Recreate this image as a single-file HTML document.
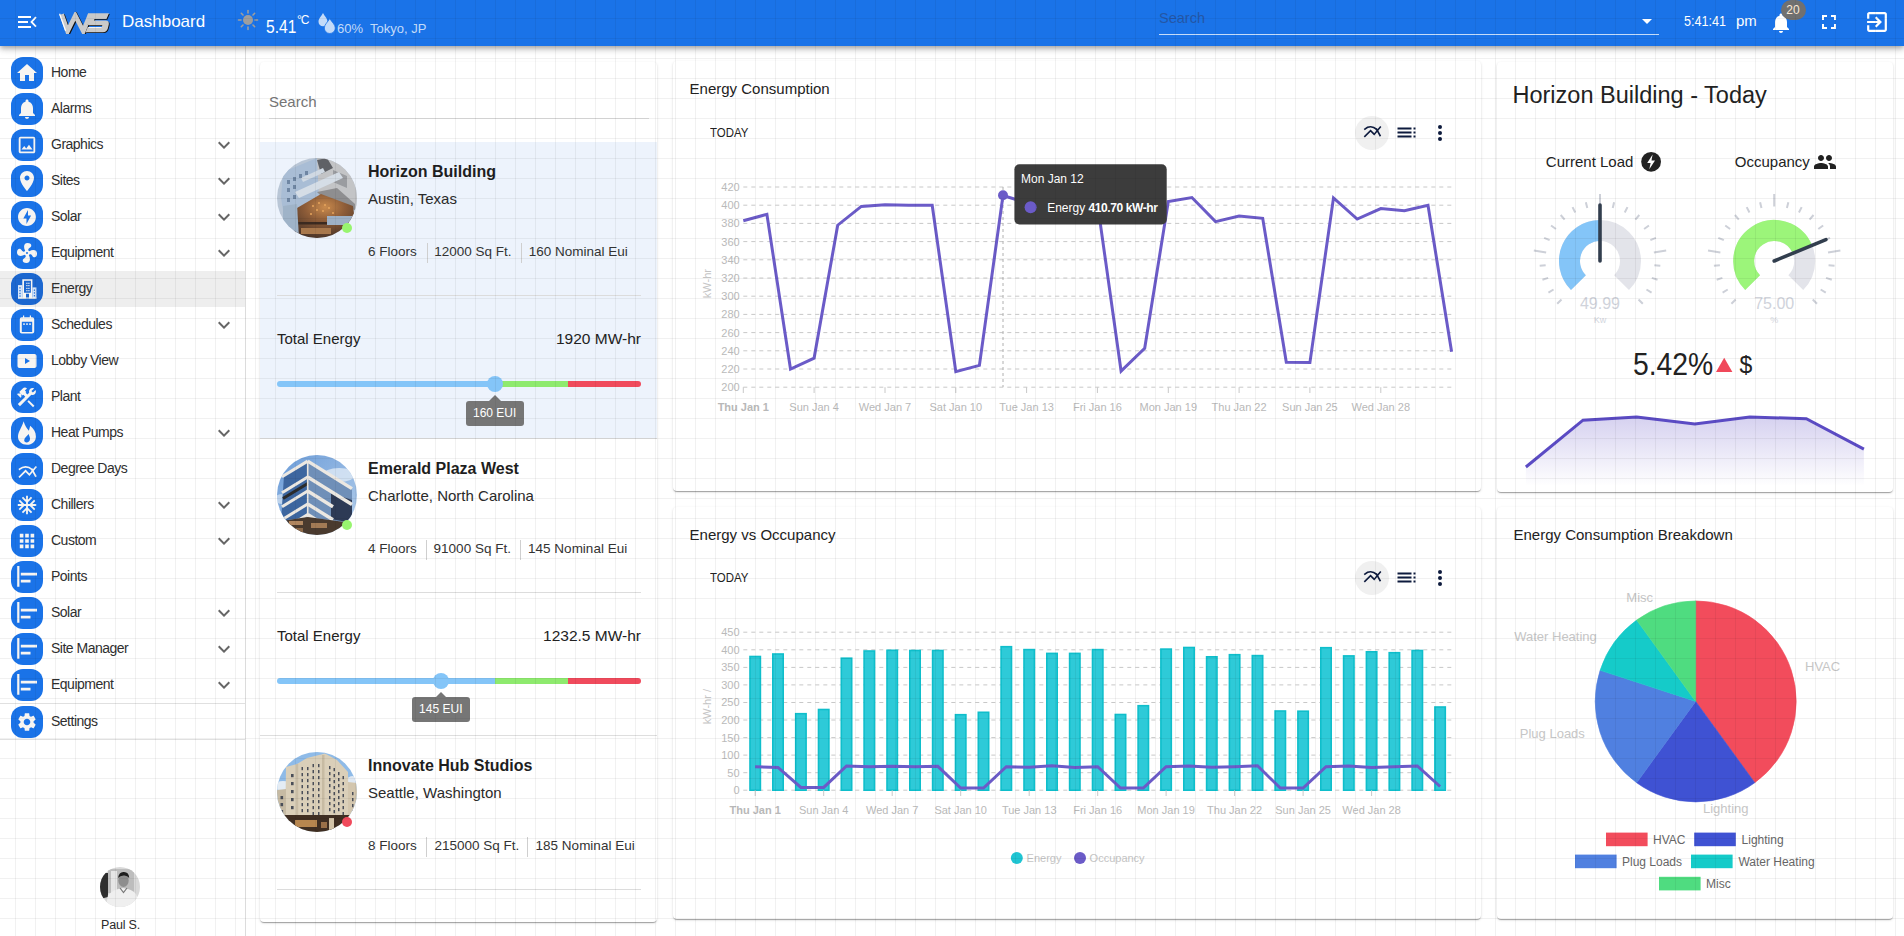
<!DOCTYPE html>
<html><head><meta charset="utf-8">
<style>
*{box-sizing:border-box}
html,body{margin:0;padding:0}
body{width:1904px;height:936px;overflow:hidden;position:relative;background:#fff;font-family:"Liberation Sans",sans-serif;color:#222}
.abs{position:absolute}
.grid{position:absolute;left:0;top:0;width:1904px;height:936px;z-index:100;pointer-events:none;
background-image:linear-gradient(to right,rgba(0,0,0,.055) 1px,transparent 1px),linear-gradient(to bottom,rgba(0,0,0,.055) 1px,transparent 1px);
background-size:20px 20px;background-position:15px 18px}
#hdr{left:0;top:0;width:1904px;height:46px;background:#1a73e8;z-index:10;box-shadow:0 2px 4px -1px rgba(0,0,0,.2),0 4px 5px 0 rgba(0,0,0,.14),0 1px 10px 0 rgba(0,0,0,.12)}
.ht{position:absolute;white-space:nowrap;line-height:1}
#side{left:0;top:46px;width:246px;height:890px;border-right:1px solid #dcdcdc;background:#fff}
.mi{position:absolute;left:0;width:245px;height:36px}
.mi .ic{position:absolute;left:11px;top:2px;width:32px;height:32px;border-radius:12px;background:#1a73e8}
.mi .ic svg{position:absolute;left:4px;top:4px;width:24px;height:24px;fill:#f7f5f2}
.mi .lb{position:absolute;left:51px;top:8.8px;font-size:14px;letter-spacing:-.5px;line-height:16px;color:#2f2f2f;white-space:nowrap}
.mi .cv{position:absolute;left:216px;top:11px;width:16px;height:16px}
.card{position:absolute;background:#fff;border-radius:4px;box-shadow:0 2px 1px -1px rgba(0,0,0,.2),0 1px 1px 0 rgba(0,0,0,.14),0 1px 3px 0 rgba(0,0,0,.12)}
</style></head><body>
<div class="grid"></div>

<!-- HEADER -->
<div id="hdr" class="abs">
  <svg class="abs" style="left:17px;top:15px" width="20" height="14" viewBox="0 0 20 14">
    <rect x="1" y="1" width="13" height="2" fill="#fff"/><rect x="1" y="6" width="10" height="2" fill="#fff"/><rect x="1" y="11" width="13" height="2" fill="#fff"/>
    <path d="M19 2.2 L14.5 7 L19 11.6" stroke="#fff" stroke-width="1.8" fill="none"/>
  </svg>
  <svg class="abs" style="left:57px;top:12px" width="54" height="22" viewBox="0 0 54 22">
    <polyline points="4.6,2.2 10.6,19.2 18.3,3.6 26.3,19.2 33,3" fill="none" stroke="#111" stroke-width="4.6" stroke-linejoin="miter" stroke-miterlimit="3" transform="translate(1,0.8)"/>
    <polyline points="4.6,2.2 10.6,19.2 18.3,3.6 26.3,19.2 33,3" fill="none" stroke="#cbcbcb" stroke-width="4.6" stroke-linejoin="miter" stroke-miterlimit="3"/>
    <path d="M2.6 1.8 L8.6 18.8" stroke="#fff" stroke-width="1.2"/>
    <path d="M31 1.2 H52 L49.5 7 H37.5 L37 8.5 H48.5 Q52.5 8.5 51.8 12.5 L50.8 16.5 Q49.8 20.2 46 20.2 H28.5 L30.8 15 H44.8 L45.3 13.2 H33 Q29.2 13.2 30 10Z" fill="#111" transform="translate(0.8,0.8)"/>
    <path d="M31 1.2 H52 L49.5 7 H37.5 L37 8.5 H48.5 Q52.5 8.5 51.8 12.5 L50.8 16.5 Q49.8 20.2 46 20.2 H28.5 L30.8 15 H44.8 L45.3 13.2 H33 Q29.2 13.2 30 10Z" fill="#c9c9c9"/>
    <path d="M31.5 15.5 H44.5" stroke="#fff" stroke-width=".8"/>
  </svg>
  <div class="ht" style="left:122px;top:13px;font-size:17px;color:#fff">Dashboard</div>
  <svg class="abs" style="left:237px;top:9px" width="22" height="22" viewBox="0 0 22 22">
    <circle cx="11" cy="11" r="5" fill="#9e9e9e"/>
    <g stroke="#9e9e9e" stroke-width="1.6" stroke-linecap="round">
      <line x1="11" y1="1.5" x2="11" y2="4"/><line x1="11" y1="18" x2="11" y2="20.5"/><line x1="1.5" y1="11" x2="4" y2="11"/><line x1="18" y1="11" x2="20.5" y2="11"/>
      <line x1="4.3" y1="4.3" x2="6" y2="6"/><line x1="16" y1="16" x2="17.7" y2="17.7"/><line x1="4.3" y1="17.7" x2="6" y2="16"/><line x1="16" y1="6" x2="17.7" y2="4.3"/>
    </g>
  </svg>
  <div class="ht" style="left:266px;top:16.8px;font-size:19px;color:#fff;transform:scaleX(.82);transform-origin:0 0">5.41</div>
  <div class="ht" style="left:297px;top:14px;font-size:12px;color:#fff;letter-spacing:-1px">°C</div>
  <svg class="abs" style="left:318px;top:13px" width="18" height="21" viewBox="0 0 18 21">
    <path d="M5 0 C6.5 3 9.5 5.5 9.5 8.8 A4.5 4.5 0 0 1 0.5 8.8 C0.5 5.5 3.5 3 5 0Z" fill="#c3dbf9"/>
    <path d="M11.8 5.5 C13.5 8.8 17.3 11.5 17.3 15 A5.5 5.5 0 0 1 6.3 15 C6.3 11.5 10 8.8 11.8 5.5Z" fill="#c3dbf9" stroke="#1a73e8" stroke-width="0.8"/>
  </svg>
  <div class="ht" style="left:337px;top:22px;font-size:13px;color:#c3dbf9">60%</div>
  <div class="ht" style="left:370px;top:22px;font-size:13px;color:#c3dbf9">Tokyo, JP</div>

  <div class="ht" style="left:1159px;top:11px;font-size:14.5px;color:#2457a6">Search</div>
  <div class="abs" style="left:1159px;top:34px;width:500px;height:1px;background:rgba(255,255,255,.75)"></div>
  <svg class="abs" style="left:1641px;top:18px" width="12" height="7" viewBox="0 0 12 7"><path d="M1 1 H11 L6 6Z" fill="#fff"/></svg>
  <div class="ht" style="left:1683.5px;top:13px;font-size:15px;transform:scaleX(.84);transform-origin:0 0;color:#fff">5:41:41</div><div class="ht" style="left:1736px;top:13px;font-size:15px;color:#fff">pm</div>
  <svg class="abs" style="left:1769px;top:12px" width="24" height="22" viewBox="0 1 24 22"><path fill="#fff" d="M12 22c1.1 0 2-.9 2-2h-4c0 1.1.89 2 2 2zm6-6v-5c0-3.07-1.64-5.64-4.5-6.32V4c0-.83-.67-1.5-1.5-1.5s-1.5.67-1.5 1.5v.68C7.63 5.36 6 7.92 6 11v5l-2 2v1h16v-1l-2-2z"/></svg>
  <div class="abs" style="left:1780.5px;top:0;width:25px;height:20px;border-radius:10px;background:#707070;color:#fbe9d6;font-size:12px;line-height:20px;text-align:center">20</div>
  <svg class="abs" style="left:1822px;top:15px" width="14" height="14" viewBox="5 5 14 14"><path fill="#fff" d="M7 14H5v5h5v-2H7v-3zm-2-4h2V7h3V5H5v5zm12 7h-3v2h5v-5h-2v3zM14 5v2h3v3h2V5h-5z"/></svg>
  <svg class="abs" style="left:1866px;top:11px" width="22" height="22" viewBox="2 2 20 20"><path fill="#fff" d="M10.09 15.59L11.5 17l5-5-5-5-1.41 1.41L12.67 11H3v2h9.67l-2.58 2.59zM19 3H5c-1.11 0-2 .9-2 2v4h2V5h14v14H5v-4H3v4c0 1.1.89 2 2 2h14c1.1 0 2-.9 2-2V5c0-1.1-.9-2-2-2z"/></svg>
</div>

<!-- SIDEBAR -->
<div id="side" class="abs">
<div class="abs" style="left:0;top:225px;width:245px;height:36px;background:#eee"></div>
<div class="abs" style="left:0;top:657px;width:245px;height:1px;background:#e0e0e0"></div>
<div class="abs" style="left:0;top:693px;width:245px;height:1px;background:#e0e0e0"></div>
<div class="mi" style="top:9px"><div class="ic"><svg viewBox="0 0 24 24"><path d="M10 20v-6h4v6h5v-8h3L12 3 2 12h3v8z"/></svg></div><div class="lb">Home</div></div>
<div class="mi" style="top:45px"><div class="ic"><svg viewBox="0 0 24 24"><path d="M12 22c1.1 0 2-.9 2-2h-4c0 1.1.89 2 2 2zm6-6v-5c0-3.07-1.64-5.64-4.5-6.32V4c0-.83-.67-1.5-1.5-1.5s-1.5.67-1.5 1.5v.68C7.63 5.36 6 7.92 6 11v5l-2 2v1h16v-1l-2-2z"/></svg></div><div class="lb">Alarms</div></div>
<div class="mi" style="top:81px"><div class="ic"><svg viewBox="0 0 24 24"><path d="M19 5v14H5V5h14m0-2H5c-1.1 0-2 .9-2 2v14c0 1.1.9 2 2 2h14c1.1 0 2-.9 2-2V5c0-1.1-.9-2-2-2zm-4.86 8.86l-3 3.87L9 13.14 6 17h12l-3.86-5.14z" transform="translate(12,12) scale(.92) translate(-12,-12)"/></svg></div><div class="lb">Graphics</div><svg class="cv" viewBox="0 0 24 24" width="24" height="24" style="left:212px;top:5.8px;width:24px;height:24px"><path d="M16.59 8.59L12 13.17 7.41 8.59 6 10l6 6 6-6z" fill="#666"/></svg></div>
<div class="mi" style="top:117px"><div class="ic"><svg viewBox="0 0 24 24"><path d="M12 2C8.13 2 5 5.13 5 9c0 5.25 7 13 7 13s7-7.75 7-13c0-3.87-3.13-7-7-7zm0 9.5c-1.38 0-2.5-1.12-2.5-2.5s1.12-2.5 2.5-2.5 2.5 1.12 2.5 2.5-1.12 2.5-2.5 2.5z"/></svg></div><div class="lb">Sites</div><svg class="cv" viewBox="0 0 24 24" width="24" height="24" style="left:212px;top:5.8px;width:24px;height:24px"><path d="M16.59 8.59L12 13.17 7.41 8.59 6 10l6 6 6-6z" fill="#666"/></svg></div>
<div class="mi" style="top:153px"><div class="ic"><svg viewBox="0 0 24 24"><path d="M12 3.02c-4.95 0-8.98 4.03-8.98 8.98s4.03 8.98 8.98 8.98 8.98-4.03 8.98-8.98S16.95 3.02 12 3.02zM11.48 19v-5.5H8.3L13 5v5.5h3.1L11.48 19z"/></svg></div><div class="lb">Solar</div><svg class="cv" viewBox="0 0 24 24" width="24" height="24" style="left:212px;top:5.8px;width:24px;height:24px"><path d="M16.59 8.59L12 13.17 7.41 8.59 6 10l6 6 6-6z" fill="#666"/></svg></div>
<div class="mi" style="top:189px"><div class="ic"><svg viewBox="0 0 24 24"><path d="M12,11A1,1 0 0,0 11,12A1,1 0 0,0 12,13A1,1 0 0,0 13,12A1,1 0 0,0 12,11M12.5,2C17,2 17.11,5.57 14.75,6.75C13.76,7.24 13.32,8.29 13.13,9.22C13.61,9.42 14.03,9.73 14.35,10.13C18.05,8.13 22.03,8.92 22.03,12.5C22.03,17 18.46,17.1 17.28,14.73C16.78,13.74 15.72,13.3 14.79,13.11C14.59,13.59 14.28,14 13.88,14.34C15.87,18.03 15.08,22 11.5,22C7,22 6.91,18.42 9.27,17.24C10.25,16.75 10.69,15.71 10.89,14.79C10.4,14.59 9.97,14.27 9.65,13.87C5.96,15.85 2,15.07 2,11.5C2,7 5.56,6.89 6.74,9.26C7.24,10.25 8.29,10.68 9.22,10.87C9.41,10.39 9.73,9.97 10.14,9.65C8.15,5.96 8.94,2 12.5,2Z"/></svg></div><div class="lb">Equipment</div><svg class="cv" viewBox="0 0 24 24" width="24" height="24" style="left:212px;top:5.8px;width:24px;height:24px"><path d="M16.59 8.59L12 13.17 7.41 8.59 6 10l6 6 6-6z" fill="#666"/></svg></div>
<div class="mi" style="top:225px"><div class="ic" style="background:#1b67d0"><svg viewBox="0 0 24 24"><path fill-rule="evenodd" d="M7.3 2.3H17.4V21.6H7.3ZM9 3.8H15.9V15.8H9ZM11 16.8H14V21.6H11Z"/><rect x="3" y="8.1" width="4.3" height="13.5" fill="#d6e6fb"/><rect x="17.4" y="10.4" width="4" height="11.2" fill="#d6e6fb"/><g fill="#1b67d0"><rect x="4.4" y="10.2" width="1.2" height="1.3"/><rect x="4.4" y="13" width="1.2" height="1.3"/><rect x="4.4" y="15.8" width="1.2" height="1.3"/><rect x="4.4" y="18.4" width="1.2" height="1.3"/><rect x="18.8" y="12.5" width="1.2" height="1.3"/><rect x="18.8" y="15.3" width="1.2" height="1.3"/><rect x="18.8" y="18.1" width="1.2" height="1.3"/></g><rect x="11.3" y="5.7" width="1.2" height="1.2"/><rect x="13.3" y="5.7" width="1.2" height="1.2"/><rect x="11.3" y="8" width="1.2" height="1.2"/><rect x="13.3" y="8" width="1.2" height="1.2"/><rect x="11.3" y="10.8" width="1.2" height="1.2"/><rect x="13.3" y="10.8" width="1.2" height="1.2"/><rect x="11.3" y="13.1" width="1.2" height="1.2"/><rect x="13.3" y="13.1" width="1.2" height="1.2"/><rect x="3" y="20.5" width="18.4" height="1.1"/></svg></div><div class="lb">Energy</div></div>
<div class="mi" style="top:261px"><div class="ic"><svg viewBox="0 0 24 24"><path fill-rule="evenodd" d="M8 2.6h1.2v1.6h5.6V2.6H16v1.6h1.2c1.1 0 2 .9 2 2v12.2c0 1.1-.9 2-2 2H6.8c-1.1 0-2-.9-2-2V6.2c0-1.1.9-2 2-2H8zM6.8 8.7v10.3h10.4V8.7z"/><rect x="8.2" y="10.3" width="1.6" height="1.6"/><rect x="11.2" y="10.3" width="1.6" height="1.6"/><rect x="14.2" y="10.3" width="1.6" height="1.6"/></svg></div><div class="lb">Schedules</div><svg class="cv" viewBox="0 0 24 24" width="24" height="24" style="left:212px;top:5.8px;width:24px;height:24px"><path d="M16.59 8.59L12 13.17 7.41 8.59 6 10l6 6 6-6z" fill="#666"/></svg></div>
<div class="mi" style="top:297px"><div class="ic"><svg viewBox="0 0 24 24"><path d="M19.5 5H4.5C3.4 5 2.5 5.9 2.5 7v10c0 1.1.9 2 2 2h15c1.1 0 2-.9 2-2V7c0-1.1-.9-2-2-2zM10 15V9l5 3z"/></svg></div><div class="lb">Lobby View</div></div>
<div class="mi" style="top:333px"><div class="ic"><svg viewBox="0 0 24 24"><path d="M13.78 15.17l-1.41 1.41 5.66 5.66 1.41-1.41zM17.5 10c1.93 0 3.5-1.57 3.5-3.5 0-.58-.16-1.12-.41-1.6l-2.7 2.7-1.49-1.49 2.7-2.7c-.48-.25-1.02-.41-1.6-.41C15.57 3 14 4.57 14 6.5c0 .41.08.8.21 1.16l-1.85 1.85-1.78-1.78.71-.71-1.41-1.41L12 3.49c-1.17-1.17-3.07-1.17-4.24 0L4.22 7.03l1.41 1.41H2.81l-.71.71 3.54 3.54.71-.71V9.15l1.41 1.41.71-.71 1.78 1.78-7.41 7.41 2.12 2.12L16.34 9.79c.36.13.75.21 1.16.21z"/></svg></div><div class="lb">Plant</div></div>
<div class="mi" style="top:369px"><div class="ic"><svg viewBox="0 0 24 24"><path d="M8.6 0.2C9.5 3 10.5 5.5 13.9 9.7L15.2 4.8C18.5 7.5 21 11 21 15.5C21 20.5 17 23.8 12 23.8C7 23.8 3 20.5 3 15.8C3 10.5 7 6.5 8.6 0.2Z"/><path fill="#1a73e8" d="M13.7 13C12 15 9.2 16.8 9.2 19.3C9.2 20.8 10.5 21.8 12 21.5C13.8 21.2 15 19.8 15 17.8C15 16 14 14.5 13.7 13Z"/></svg></div><div class="lb">Heat Pumps</div><svg class="cv" viewBox="0 0 24 24" width="24" height="24" style="left:212px;top:5.8px;width:24px;height:24px"><path d="M16.59 8.59L12 13.17 7.41 8.59 6 10l6 6 6-6z" fill="#666"/></svg></div>
<div class="mi" style="top:405px"><div class="ic"><svg viewBox="0 0 24 24"><g fill="none" stroke="#f7f5f2" stroke-width="1.7" stroke-linecap="square"><path d="M4.6 12.2C8 9.3 13 8.8 17 12.5"/><path d="M4.6 19.8L10.6 13.8L14.4 17.8L20.8 10.2"/><path d="M17 12.5L20.6 19" /></g></svg></div><div class="lb">Degree Days</div></div>
<div class="mi" style="top:441px"><div class="ic"><svg viewBox="0 0 24 24"><path d="M22 11h-4.17l3.24-3.24-1.41-1.42L15 11h-2V9l4.66-4.66-1.42-1.41L13 6.17V2h-2v4.17L7.76 2.93 6.34 4.34 11 9v2H9L4.34 6.34 2.93 7.76 6.17 11H2v2h4.17l-3.24 3.24 1.41 1.42L9 13h2v2l-4.66 4.66 1.42 1.41L11 17.83V22h2v-4.17l3.24 3.24 1.42-1.41L13 15v-2h2l4.66 4.66 1.41-1.42L17.83 13H22z" transform="translate(12,12) scale(.92) translate(-12,-12)"/></svg></div><div class="lb">Chillers</div><svg class="cv" viewBox="0 0 24 24" width="24" height="24" style="left:212px;top:5.8px;width:24px;height:24px"><path d="M16.59 8.59L12 13.17 7.41 8.59 6 10l6 6 6-6z" fill="#666"/></svg></div>
<div class="mi" style="top:477px"><div class="ic"><svg viewBox="0 0 24 24"><path transform="translate(12,12) scale(.9) translate(-12,-12)" d="M4 8h4V4H4v4zm6 12h4v-4h-4v4zm-6 0h4v-4H4v4zm0-6h4v-4H4v4zm6 0h4v-4h-4v4zm6-10v4h4V4h-4zm-6 4h4V4h-4v4zm6 6h4v-4h-4v4zm0 6h4v-4h-4v4z"/></svg></div><div class="lb">Custom</div><svg class="cv" viewBox="0 0 24 24" width="24" height="24" style="left:212px;top:5.8px;width:24px;height:24px"><path d="M16.59 8.59L12 13.17 7.41 8.59 6 10l6 6 6-6z" fill="#666"/></svg></div>
<div class="mi" style="top:513px"><div class="ic"><svg viewBox="0 0 24 24"><path d="M4.4 21.7H2.2V.9h2.2zM22 7.8H5.8v2.7H22zM15.5 14.7H5.8v2.8h9.7z"/></svg></div><div class="lb">Points</div></div>
<div class="mi" style="top:549px"><div class="ic"><svg viewBox="0 0 24 24"><path d="M4.4 21.7H2.2V.9h2.2zM22 7.8H5.8v2.7H22zM15.5 14.7H5.8v2.8h9.7z"/></svg></div><div class="lb">Solar</div><svg class="cv" viewBox="0 0 24 24" width="24" height="24" style="left:212px;top:5.8px;width:24px;height:24px"><path d="M16.59 8.59L12 13.17 7.41 8.59 6 10l6 6 6-6z" fill="#666"/></svg></div>
<div class="mi" style="top:585px"><div class="ic"><svg viewBox="0 0 24 24"><path d="M4.4 21.7H2.2V.9h2.2zM22 7.8H5.8v2.7H22zM15.5 14.7H5.8v2.8h9.7z"/></svg></div><div class="lb">Site Manager</div><svg class="cv" viewBox="0 0 24 24" width="24" height="24" style="left:212px;top:5.8px;width:24px;height:24px"><path d="M16.59 8.59L12 13.17 7.41 8.59 6 10l6 6 6-6z" fill="#666"/></svg></div>
<div class="mi" style="top:621px"><div class="ic"><svg viewBox="0 0 24 24"><path d="M4.4 21.7H2.2V.9h2.2zM22 7.8H5.8v2.7H22zM15.5 14.7H5.8v2.8h9.7z"/></svg></div><div class="lb">Equipment</div><svg class="cv" viewBox="0 0 24 24" width="24" height="24" style="left:212px;top:5.8px;width:24px;height:24px"><path d="M16.59 8.59L12 13.17 7.41 8.59 6 10l6 6 6-6z" fill="#666"/></svg></div>
<div class="mi" style="top:658px"><div class="ic"><svg viewBox="0 0 24 24"><path d="M19.14 12.94c.04-.3.06-.61.06-.94 0-.32-.02-.64-.07-.94l2.03-1.58c.18-.14.23-.41.12-.61l-1.92-3.32c-.12-.22-.37-.29-.59-.22l-2.39.96c-.5-.38-1.03-.7-1.62-.94l-.36-2.54c-.04-.24-.24-.41-.48-.41h-3.84c-.24 0-.43.17-.47.41l-.36 2.54c-.59.24-1.130.57-1.62.94l-2.39-.96c-.22-.08-.47 0-.59.22L2.74 8.87c-.12.21-.08.47.12.61l2.03 1.58c-.05.3-.09.63-.09.94s.02.64.07.94l-2.03 1.58c-.18.14-.23.41-.12.61l1.92 3.32c.12.22.37.29.59.22l2.39-.96c.5.38 1.03.7 1.62.94l.36 2.54c.05.24.24.41.48.41h3.84c.24 0 .44-.17.47-.41l.36-2.54c.59-.24 1.130-.56 1.62-.94l2.39.96c.22.08.47 0 .59-.22l1.920-3.32c.12-.22.07-.47-.12-.61l-2.01-1.58zM12 15.6c-1.98 0-3.6-1.62-3.6-3.6s1.62-3.6 3.6-3.6 3.6 1.62 3.6 3.6-1.62 3.6-3.6 3.6z" transform="translate(12,12) scale(.92) translate(-12,-12)"/></svg></div><div class="lb">Settings</div></div>
<div class="abs" style="left:100px;top:821px;width:40px;height:40px"><svg width="40" height="40" viewBox="0 0 40 40"><defs><clipPath id="avc"><circle cx="20" cy="20" r="20"/></clipPath></defs><g clip-path="url(#avc)">
<rect width="40" height="40" fill="#d9d9d9"/><rect x="8" y="2" width="26" height="24" fill="#bdbdbd"/><rect x="11" y="4" width="6" height="22" fill="#e6e6e6"/>
<path d="M0 6 H8 V30 L0 32Z" fill="#2e2e2e"/>
<ellipse cx="23.5" cy="13.5" rx="5.2" ry="6.5" fill="#8e8e8e"/><path d="M18 11 Q19 4.5 24 5 Q29 5 29.2 11 Q27 8 23.5 8.5 Q20 8.5 18 11Z" fill="#1e1e1e"/>
<path d="M6 40 L8 28 Q14 22 23 21 Q32 22 36 27 L40 40Z" fill="#efefef"/><path d="M20 21 L23.5 25.5 L27 21" fill="none" stroke="#777" stroke-width="1.2"/>
</g></svg></div>
<div class="ht" style="left:101px;top:872.6px;font-size:12.5px;letter-spacing:-.2px;color:#2a2a2a">Paul S.</div>
</div>
<!-- BUILDINGS -->
<div class="card" style="left:260px;top:62px;width:397px;height:860px;overflow:hidden">
<div class="ht" style="left:9px;top:31.5px;font-size:15px;color:#757575">Search</div>
<div class="abs" style="left:9px;top:55.5px;width:380px;height:1px;background:#dedede"></div>
<div class="abs" style="left:0;top:79.7px;width:397px;height:297px;background:#edf3fc;border-bottom:1px solid #dedede;"></div>
<div class="abs" style="left:17px;top:95.7px;width:80px;height:80px"><svg width="80" height="80" viewBox="0 0 80 80"><defs><clipPath id="c1"><circle cx="40" cy="40" r="40"/></clipPath><radialGradient id="g1" cx=".5" cy=".3" r=".7"><stop offset="0" stop-color="#c98a4c"/><stop offset=".45" stop-color="#8d5c38"/><stop offset="1" stop-color="#4d3628"/></radialGradient></defs><g clip-path="url(#c1)"><rect width="80" height="80" fill="#b9c6d6"/><polygon points="6,14 40,0 42,40 22,52 8,64 4,40" fill="#a9bdd5"/><polygon points="40,0 52,-2 80,10 80,52 62,44 42,38" fill="#c3c4c6"/><polygon points="40,2 50,0 56,10 44,16" fill="#5f6166"/><polygon points="56,12 70,18 70,30 56,24" fill="#9a9ca0"/><polygon points="18,34 62,14 66,20 22,40" fill="#d5dde6"/><polygon points="24,20 46,10 48,14 26,24" fill="#d0d9e3"/><polygon points="40,34 60,30 78,46 78,52 50,44" fill="#8e8e90"/><rect x="10" y="22" width="3" height="4" fill="#6f86a3"/><rect x="16" y="19" width="3" height="4" fill="#6f86a3"/><rect x="22" y="16" width="3" height="4" fill="#6f86a3"/><rect x="28" y="13" width="3" height="4" fill="#6f86a3"/><rect x="10" y="30" width="3" height="4" fill="#6f86a3"/><rect x="16" y="27" width="3" height="4" fill="#6f86a3"/><rect x="10" y="40" width="3" height="4" fill="#6f86a3"/><rect x="16" y="37" width="3" height="4" fill="#6f86a3"/><rect x="10" y="50" width="3" height="4" fill="#6f86a3"/><polygon points="20,50 44,36 76,48 80,80 16,80" fill="url(#g1)"/><g fill="#e6a55c"><circle cx="36" cy="48" r="1"/><circle cx="42" cy="45" r="1"/><circle cx="48" cy="47" r="1"/><circle cx="40" cy="52" r="1"/><circle cx="46" cy="53" r="1"/><circle cx="52" cy="50" r="1"/><circle cx="34" cy="56" r="1"/><circle cx="56" cy="55" r="1"/></g><rect x="14" y="64" width="66" height="2.5" fill="#3b2a20"/><polygon points="50,58 76,58 76,67 50,67" fill="#9eb1c6"/><polygon points="6,48 20,46 22,80 6,80" fill="#9fb3c8"/><rect x="24" y="70" width="30" height="6" fill="#a8784c"/></g></svg></div>
<div class="abs" style="left:82px;top:161.2px;width:10px;height:10px;border-radius:5px;background:#98f56f"></div>
<div class="ht" style="left:108px;top:101.7px;font-size:16px;font-weight:700;color:#1e1e1e">Horizon Building</div>
<div class="ht" style="left:108px;top:128.7px;font-size:15px;color:#2a2a2a">Austin, Texas</div>
<div class="ht" style="left:108.0px;top:183.2px;font-size:13.5px;color:#333">6 Floors</div><div class="ht" style="left:174.3px;top:183.2px;font-size:13.5px;color:#333">12000 Sq Ft.</div><div class="ht" style="left:268.8px;top:183.2px;font-size:13.5px;color:#333">160 Nominal Eui</div>
<div class="abs" style="left:166.7px;top:180.7px;width:1px;height:20px;background:#cfcfcf"></div>
<div class="abs" style="left:260.7px;top:180.7px;width:1px;height:20px;background:#cfcfcf"></div>
<div class="abs" style="left:17px;top:232.7px;width:364px;height:1px;background:#dcdcdc"></div>
<div class="ht" style="left:17px;top:268.7px;font-size:15px;color:#222">Total Energy</div>
<div class="ht" style="right:16px;top:268.7px;font-size:15.5px;color:#222">1920 MW-hr</div>
<div class="abs" style="left:17px;top:319.0px;width:364px;height:6px;border-radius:3px;background:linear-gradient(to right,#84c5f8 0,#84c5f8 218px,#8eea6e 218px,#8eea6e 291px,#f04a5c 291px)"></div>
<div class="abs" style="left:226.7px;top:314.0px;width:16px;height:16px;border-radius:8px;background:#84c5f8"></div>
<div class="abs" style="left:205.7px;top:338.5px;width:58px;height:25px;border-radius:3px;background:#767676;color:#fff;font-size:12px;line-height:25px;text-align:center">160 EUI</div>
<div class="abs" style="left:228.7px;top:332.7px;width:0;height:0;border-left:6px solid transparent;border-right:6px solid transparent;border-bottom:6px solid #767676"></div>
<div class="abs" style="left:0;top:376.5px;width:397px;height:297px;border-bottom:1px solid #dedede;"></div>
<div class="abs" style="left:17px;top:392.5px;width:80px;height:80px"><svg width="80" height="80" viewBox="0 0 80 80"><defs><clipPath id="c2"><circle cx="40" cy="40" r="40"/></clipPath><linearGradient id="sk2" x1="0" y1="0" x2="1" y2="1"><stop offset="0" stop-color="#6a9bd8"/><stop offset="1" stop-color="#b5cfeb"/></linearGradient></defs><g clip-path="url(#c2)"><rect width="80" height="80" fill="url(#sk2)"/><ellipse cx="62" cy="20" rx="16" ry="7" fill="#d9e6f4" opacity=".85"/><ellipse cx="6" cy="44" rx="9" ry="5" fill="#d9e6f4" opacity=".7"/><polygon points="7,20.6 30.7,6.1 30.7,62 4,66" fill="#3d669f"/><polygon points="30.7,6.1 75,33.5 75,68 30.7,62" fill="#6f8fb8"/><polygon points="54,38 75,45 75,68 54,64" fill="#2d3a55"/><line x1="30.7" y1="6.1" x2="75" y2="33.6" stroke="#ece8e2" stroke-width="3.4"/><line x1="30.7" y1="6.1" x2="5" y2="21.8" stroke="#ece8e2" stroke-width="3"/><line x1="30.7" y1="22" x2="75" y2="49.5" stroke="#ece8e2" stroke-width="3.4"/><line x1="30.7" y1="22" x2="5" y2="37.7" stroke="#ece8e2" stroke-width="3"/><line x1="30.7" y1="36" x2="56" y2="51.7" stroke="#ece8e2" stroke-width="3.4"/><line x1="30.7" y1="36" x2="5" y2="51.7" stroke="#ece8e2" stroke-width="3"/><line x1="30.7" y1="49" x2="56" y2="64.7" stroke="#ece8e2" stroke-width="3.4"/><line x1="30.7" y1="49" x2="5" y2="64.7" stroke="#ece8e2" stroke-width="3"/><line x1="30.7" y1="59.5" x2="56" y2="75.2" stroke="#ece8e2" stroke-width="3.4"/><line x1="30.7" y1="59.5" x2="5" y2="75.2" stroke="#ece8e2" stroke-width="3"/><line x1="30.7" y1="28.5" x2="6" y2="43.5" stroke="#2b2b2b" stroke-width="3"/><line x1="30.7" y1="6" x2="30.7" y2="78" stroke="#ebe6df" stroke-width="1.6"/><polygon points="4,66 30.7,62 75,68 75,80 0,80" fill="#4a3a2e"/><rect x="12" y="66" width="14" height="4" fill="#b08660"/><rect x="34" y="68" width="16" height="5" fill="#a27a55"/><rect x="14" y="73" width="12" height="4" fill="#8d6a4a"/></g></svg></div>
<div class="abs" style="left:82px;top:458.0px;width:10px;height:10px;border-radius:5px;background:#98f56f"></div>
<div class="ht" style="left:108px;top:398.5px;font-size:16px;font-weight:700;color:#1e1e1e">Emerald Plaza West</div>
<div class="ht" style="left:108px;top:425.5px;font-size:15px;color:#2a2a2a">Charlotte, North Carolina</div>
<div class="ht" style="left:108.0px;top:480.0px;font-size:13.5px;color:#333">4 Floors</div><div class="ht" style="left:173.6px;top:480.0px;font-size:13.5px;color:#333">91000 Sq Ft.</div><div class="ht" style="left:268.1px;top:480.0px;font-size:13.5px;color:#333">145 Nominal Eui</div>
<div class="abs" style="left:165.5px;top:477.5px;width:1px;height:20px;background:#cfcfcf"></div>
<div class="abs" style="left:259.7px;top:477.5px;width:1px;height:20px;background:#cfcfcf"></div>
<div class="abs" style="left:17px;top:529.5px;width:364px;height:1px;background:#dcdcdc"></div>
<div class="ht" style="left:17px;top:565.5px;font-size:15px;color:#222">Total Energy</div>
<div class="ht" style="right:16px;top:565.5px;font-size:15.5px;color:#222">1232.5 MW-hr</div>
<div class="abs" style="left:17px;top:615.8px;width:364px;height:6px;border-radius:3px;background:linear-gradient(to right,#84c5f8 0,#84c5f8 218px,#8eea6e 218px,#8eea6e 291px,#f04a5c 291px)"></div>
<div class="abs" style="left:172.8px;top:610.8px;width:16px;height:16px;border-radius:8px;background:#84c5f8"></div>
<div class="abs" style="left:151.8px;top:635.3px;width:58px;height:25px;border-radius:3px;background:#767676;color:#fff;font-size:12px;line-height:25px;text-align:center">145 EUI</div>
<div class="abs" style="left:174.8px;top:629.5px;width:0;height:0;border-left:6px solid transparent;border-right:6px solid transparent;border-bottom:6px solid #767676"></div>
<div class="abs" style="left:0;top:673.5px;width:397px;height:297px;border-bottom:1px solid #dedede;"></div>
<div class="abs" style="left:17px;top:689.5px;width:80px;height:80px"><svg width="80" height="80" viewBox="0 0 80 80"><defs><clipPath id="c3"><circle cx="40" cy="40" r="40"/></clipPath></defs><g clip-path="url(#c3)"><rect width="80" height="80" fill="#8fbbe8"/><ellipse cx="6" cy="34" rx="8" ry="5" fill="#e4ecf4"/><ellipse cx="76" cy="28" rx="6" ry="4" fill="#dfe8f2"/><polygon points="9,15 20,12 30,6 48,1.5 60,8 71,20 72,80 8,80" fill="#dacfb9"/><polygon points="0,38 9,37 9,80 0,80" fill="#c6baa3"/><polygon points="71,30 80,31 80,80 71,80" fill="#d3c6ae"/><rect x="19" y="12" width="2.2" height="52" fill="#c9bda6"/><rect x="45" y="3" width="2.5" height="60" fill="#c7bba3"/><rect x="14" y="22" width="2.6" height="3.2" fill="#4a4e58"/><rect x="14" y="30" width="2.6" height="3.2" fill="#4a4e58"/><rect x="14" y="38" width="2.6" height="3.2" fill="#4a4e58"/><rect x="14" y="46" width="2.6" height="3.2" fill="#4a4e58"/><rect x="14" y="54" width="2.6" height="3.2" fill="#4a4e58"/><rect x="24.5" y="15" width="1.5" height="3.2" fill="#4a4e58"/><rect x="24.5" y="21" width="1.5" height="3.2" fill="#4a4e58"/><rect x="24.5" y="27" width="1.5" height="3.2" fill="#4a4e58"/><rect x="24.5" y="33" width="1.5" height="3.2" fill="#4a4e58"/><rect x="24.5" y="39" width="1.5" height="3.2" fill="#4a4e58"/><rect x="24.5" y="45" width="1.5" height="3.2" fill="#4a4e58"/><rect x="24.5" y="51" width="1.5" height="3.2" fill="#4a4e58"/><rect x="24.5" y="57" width="1.5" height="3.2" fill="#4a4e58"/><rect x="30" y="15" width="1.5" height="3.2" fill="#4a4e58"/><rect x="30" y="21" width="1.5" height="3.2" fill="#4a4e58"/><rect x="30" y="27" width="1.5" height="3.2" fill="#4a4e58"/><rect x="30" y="33" width="1.5" height="3.2" fill="#4a4e58"/><rect x="30" y="39" width="1.5" height="3.2" fill="#4a4e58"/><rect x="30" y="45" width="1.5" height="3.2" fill="#4a4e58"/><rect x="30" y="51" width="1.5" height="3.2" fill="#4a4e58"/><rect x="30" y="57" width="1.5" height="3.2" fill="#4a4e58"/><rect x="35.5" y="12" width="1.5" height="3.2" fill="#4a4e58"/><rect x="35.5" y="18" width="1.5" height="3.2" fill="#4a4e58"/><rect x="35.5" y="24" width="1.5" height="3.2" fill="#4a4e58"/><rect x="35.5" y="30" width="1.5" height="3.2" fill="#4a4e58"/><rect x="35.5" y="36" width="1.5" height="3.2" fill="#4a4e58"/><rect x="35.5" y="42" width="1.5" height="3.2" fill="#4a4e58"/><rect x="35.5" y="48" width="1.5" height="3.2" fill="#4a4e58"/><rect x="35.5" y="54" width="1.5" height="3.2" fill="#4a4e58"/><rect x="35.5" y="60" width="1.5" height="3.2" fill="#4a4e58"/><rect x="41" y="12" width="1.5" height="3.2" fill="#4a4e58"/><rect x="41" y="18" width="1.5" height="3.2" fill="#4a4e58"/><rect x="41" y="24" width="1.5" height="3.2" fill="#4a4e58"/><rect x="41" y="30" width="1.5" height="3.2" fill="#4a4e58"/><rect x="41" y="36" width="1.5" height="3.2" fill="#4a4e58"/><rect x="41" y="42" width="1.5" height="3.2" fill="#4a4e58"/><rect x="41" y="48" width="1.5" height="3.2" fill="#4a4e58"/><rect x="41" y="54" width="1.5" height="3.2" fill="#4a4e58"/><rect x="41" y="60" width="1.5" height="3.2" fill="#4a4e58"/><rect x="52" y="14" width="1.5" height="3.2" fill="#4a4e58"/><rect x="52" y="20" width="1.5" height="3.2" fill="#4a4e58"/><rect x="52" y="26" width="1.5" height="3.2" fill="#4a4e58"/><rect x="52" y="32" width="1.5" height="3.2" fill="#4a4e58"/><rect x="52" y="38" width="1.5" height="3.2" fill="#4a4e58"/><rect x="52" y="44" width="1.5" height="3.2" fill="#4a4e58"/><rect x="52" y="50" width="1.5" height="3.2" fill="#4a4e58"/><rect x="52" y="56" width="1.5" height="3.2" fill="#4a4e58"/><rect x="56.5" y="16" width="1.5" height="3.2" fill="#4a4e58"/><rect x="56.5" y="22" width="1.5" height="3.2" fill="#4a4e58"/><rect x="56.5" y="28" width="1.5" height="3.2" fill="#4a4e58"/><rect x="56.5" y="34" width="1.5" height="3.2" fill="#4a4e58"/><rect x="56.5" y="40" width="1.5" height="3.2" fill="#4a4e58"/><rect x="56.5" y="46" width="1.5" height="3.2" fill="#4a4e58"/><rect x="56.5" y="52" width="1.5" height="3.2" fill="#4a4e58"/><rect x="56.5" y="58" width="1.5" height="3.2" fill="#4a4e58"/><rect x="61" y="20" width="1.5" height="3.2" fill="#4a4e58"/><rect x="61" y="26" width="1.5" height="3.2" fill="#4a4e58"/><rect x="61" y="32" width="1.5" height="3.2" fill="#4a4e58"/><rect x="61" y="38" width="1.5" height="3.2" fill="#4a4e58"/><rect x="61" y="44" width="1.5" height="3.2" fill="#4a4e58"/><rect x="61" y="50" width="1.5" height="3.2" fill="#4a4e58"/><rect x="61" y="56" width="1.5" height="3.2" fill="#4a4e58"/><rect x="65.5" y="24" width="1.5" height="3.2" fill="#4a4e58"/><rect x="65.5" y="30" width="1.5" height="3.2" fill="#4a4e58"/><rect x="65.5" y="36" width="1.5" height="3.2" fill="#4a4e58"/><rect x="65.5" y="42" width="1.5" height="3.2" fill="#4a4e58"/><rect x="65.5" y="48" width="1.5" height="3.2" fill="#4a4e58"/><rect x="65.5" y="54" width="1.5" height="3.2" fill="#4a4e58"/><rect x="65.5" y="60" width="1.5" height="3.2" fill="#4a4e58"/><rect x="3.5" y="44" width="2.6" height="3.2" fill="#4a4e58"/><rect x="3.5" y="51" width="2.6" height="3.2" fill="#4a4e58"/><rect x="3.5" y="58" width="2.6" height="3.2" fill="#4a4e58"/><rect x="75" y="40" width="1.5" height="3.2" fill="#4a4e58"/><rect x="75" y="46" width="1.5" height="3.2" fill="#4a4e58"/><rect x="75" y="52" width="1.5" height="3.2" fill="#4a4e58"/><rect x="75" y="58" width="1.5" height="3.2" fill="#4a4e58"/><rect x="0" y="63" width="80" height="17" fill="#3f2e22"/><rect x="18" y="68" width="22" height="7" fill="#b7864f"/><rect x="52" y="66" width="5" height="12" fill="#d2c3a8"/><rect x="44" y="70" width="6" height="6" fill="#9a7048"/></g></svg></div>
<div class="abs" style="left:82px;top:755.0px;width:10px;height:10px;border-radius:5px;background:#f04a5c"></div>
<div class="ht" style="left:108px;top:695.5px;font-size:16px;font-weight:700;color:#1e1e1e">Innovate Hub Studios</div>
<div class="ht" style="left:108px;top:722.5px;font-size:15px;color:#2a2a2a">Seattle, Washington</div>
<div class="ht" style="left:108.0px;top:777.0px;font-size:13.5px;color:#333">8 Floors</div><div class="ht" style="left:174.4px;top:777.0px;font-size:13.5px;color:#333">215000 Sq Ft.</div><div class="ht" style="left:275.6px;top:777.0px;font-size:13.5px;color:#333">185 Nominal Eui</div>
<div class="abs" style="left:165.5px;top:774.5px;width:1px;height:20px;background:#cfcfcf"></div>
<div class="abs" style="left:267.4px;top:774.5px;width:1px;height:20px;background:#cfcfcf"></div>
<div class="abs" style="left:17px;top:826.5px;width:364px;height:1px;background:#dcdcdc"></div>
<div class="ht" style="left:17px;top:862.5px;font-size:15px;color:#222">Total Energy</div>
<div class="ht" style="right:16px;top:862.5px;font-size:15.5px;color:#222"></div>
<div class="abs" style="left:17px;top:912.8px;width:364px;height:6px;border-radius:3px;background:linear-gradient(to right,#84c5f8 0,#84c5f8 218px,#8eea6e 218px,#8eea6e 291px,#f04a5c 291px)"></div>
<div class="abs" style="left:-268.0px;top:907.8px;width:16px;height:16px;border-radius:8px;background:#84c5f8"></div>
<div class="abs" style="left:-289.0px;top:932.3px;width:58px;height:25px;border-radius:3px;background:#767676;color:#fff;font-size:12px;line-height:25px;text-align:center"></div>
<div class="abs" style="left:-266.0px;top:926.5px;width:0;height:0;border-left:6px solid transparent;border-right:6px solid transparent;border-bottom:6px solid #767676"></div>
</div>
<!-- CHART1 -->
<div class="card" style="left:673px;top:61px;width:808px;height:430px">
<div class="ht" style="left:16.6px;top:20.2px;font-size:15px;color:#222">Energy Consumption</div>
<div class="ht" style="left:36.7px;top:65.2px;font-size:13px;transform:scaleX(.88);transform-origin:0 0;color:#222">TODAY</div>
</div>
<svg class="abs" style="left:673px;top:61px;z-index:5" width="808" height="430" viewBox="673 61 808 430"><circle cx="1372" cy="133" r="17" fill="#f0f0f0"/><g transform="translate(1360.5,117.5) scale(0.95)"><g fill="none" stroke="#0d1a3d" stroke-width="1.7" stroke-linecap="square"><path d="M4.6 12.2C8 9.3 13 8.8 17 12.5"/><path d="M4.6 19.8L10.6 13.8L14.4 17.8L20.8 10.2"/><path d="M17 12.5L20.6 19"/></g></g><g transform="translate(1418.5,120.5) scale(-1,1)" fill="#0d1a3d"><path d="M3 13h2v-2H3v2zm0 4h2v-2H3v2zm0-8h2V7H3v2zm4 4h14v-2H7v2zm0 4h14v-2H7v2zM7 7v2h14V7H7z"/></g><g transform="translate(1428,121)" fill="#0d1a3d"><circle cx="12" cy="6" r="2"/><circle cx="12" cy="12" r="2"/><circle cx="12" cy="18" r="2"/></g><line x1="743.3" y1="187.0" x2="1451.4" y2="187.0" stroke="#c8c8c8" stroke-dasharray="4 4"/><text x="739.7" y="190.9" text-anchor="end" font-size="11" fill="#bababa" font-family="Liberation Sans">420</text><line x1="743.3" y1="205.2" x2="1451.4" y2="205.2" stroke="#c8c8c8" stroke-dasharray="4 4"/><text x="739.7" y="209.1" text-anchor="end" font-size="11" fill="#bababa" font-family="Liberation Sans">400</text><line x1="743.3" y1="223.4" x2="1451.4" y2="223.4" stroke="#c8c8c8" stroke-dasharray="4 4"/><text x="739.7" y="227.3" text-anchor="end" font-size="11" fill="#bababa" font-family="Liberation Sans">380</text><line x1="743.3" y1="241.6" x2="1451.4" y2="241.6" stroke="#c8c8c8" stroke-dasharray="4 4"/><text x="739.7" y="245.5" text-anchor="end" font-size="11" fill="#bababa" font-family="Liberation Sans">360</text><line x1="743.3" y1="259.8" x2="1451.4" y2="259.8" stroke="#c8c8c8" stroke-dasharray="4 4"/><text x="739.7" y="263.7" text-anchor="end" font-size="11" fill="#bababa" font-family="Liberation Sans">340</text><line x1="743.3" y1="278.0" x2="1451.4" y2="278.0" stroke="#c8c8c8" stroke-dasharray="4 4"/><text x="739.7" y="281.9" text-anchor="end" font-size="11" fill="#bababa" font-family="Liberation Sans">320</text><line x1="743.3" y1="296.2" x2="1451.4" y2="296.2" stroke="#c8c8c8" stroke-dasharray="4 4"/><text x="739.7" y="300.1" text-anchor="end" font-size="11" fill="#bababa" font-family="Liberation Sans">300</text><line x1="743.3" y1="314.4" x2="1451.4" y2="314.4" stroke="#c8c8c8" stroke-dasharray="4 4"/><text x="739.7" y="318.3" text-anchor="end" font-size="11" fill="#bababa" font-family="Liberation Sans">280</text><line x1="743.3" y1="332.6" x2="1451.4" y2="332.6" stroke="#c8c8c8" stroke-dasharray="4 4"/><text x="739.7" y="336.5" text-anchor="end" font-size="11" fill="#bababa" font-family="Liberation Sans">260</text><line x1="743.3" y1="350.8" x2="1451.4" y2="350.8" stroke="#c8c8c8" stroke-dasharray="4 4"/><text x="739.7" y="354.7" text-anchor="end" font-size="11" fill="#bababa" font-family="Liberation Sans">240</text><line x1="743.3" y1="369.0" x2="1451.4" y2="369.0" stroke="#c8c8c8" stroke-dasharray="4 4"/><text x="739.7" y="372.9" text-anchor="end" font-size="11" fill="#bababa" font-family="Liberation Sans">220</text><line x1="743.3" y1="387.2" x2="1451.4" y2="387.2" stroke="#c8c8c8" stroke-dasharray="4 4"/><text x="739.7" y="391.1" text-anchor="end" font-size="11" fill="#bababa" font-family="Liberation Sans">200</text><line x1="743.3" y1="387.2" x2="743.3" y2="393" stroke="#c8c8c8"/><text x="743.3" y="411" text-anchor="middle" font-size="11" fill="#b8b8b8" font-family="Liberation Sans" font-weight="700">Thu Jan 1</text><line x1="814.1" y1="387.2" x2="814.1" y2="393" stroke="#c8c8c8"/><text x="814.1" y="411" text-anchor="middle" font-size="11" fill="#b8b8b8" font-family="Liberation Sans">Sun Jan 4</text><line x1="885.0" y1="387.2" x2="885.0" y2="393" stroke="#c8c8c8"/><text x="885.0" y="411" text-anchor="middle" font-size="11" fill="#b8b8b8" font-family="Liberation Sans">Wed Jan 7</text><line x1="955.8" y1="387.2" x2="955.8" y2="393" stroke="#c8c8c8"/><text x="955.8" y="411" text-anchor="middle" font-size="11" fill="#b8b8b8" font-family="Liberation Sans">Sat Jan 10</text><line x1="1026.6" y1="387.2" x2="1026.6" y2="393" stroke="#c8c8c8"/><text x="1026.6" y="411" text-anchor="middle" font-size="11" fill="#b8b8b8" font-family="Liberation Sans">Tue Jan 13</text><line x1="1097.4" y1="387.2" x2="1097.4" y2="393" stroke="#c8c8c8"/><text x="1097.4" y="411" text-anchor="middle" font-size="11" fill="#b8b8b8" font-family="Liberation Sans">Fri Jan 16</text><line x1="1168.3" y1="387.2" x2="1168.3" y2="393" stroke="#c8c8c8"/><text x="1168.3" y="411" text-anchor="middle" font-size="11" fill="#b8b8b8" font-family="Liberation Sans">Mon Jan 19</text><line x1="1239.1" y1="387.2" x2="1239.1" y2="393" stroke="#c8c8c8"/><text x="1239.1" y="411" text-anchor="middle" font-size="11" fill="#b8b8b8" font-family="Liberation Sans">Thu Jan 22</text><line x1="1309.9" y1="387.2" x2="1309.9" y2="393" stroke="#c8c8c8"/><text x="1309.9" y="411" text-anchor="middle" font-size="11" fill="#b8b8b8" font-family="Liberation Sans">Sun Jan 25</text><line x1="1380.8" y1="387.2" x2="1380.8" y2="393" stroke="#c8c8c8"/><text x="1380.8" y="411" text-anchor="middle" font-size="11" fill="#b8b8b8" font-family="Liberation Sans">Wed Jan 28</text><text transform="translate(710.5,283.6) rotate(-90)" text-anchor="middle" font-size="11" fill="#c4c4c4" font-family="Liberation Sans">kW-hr</text><line x1="1003" y1="187" x2="1003" y2="387" stroke="#b0b0b0" stroke-dasharray="3 3"/><polyline points="743.3,220.7 766.9,214.3 790.5,369.0 814.1,358.1 837.7,225.2 861.3,206.4 885.0,204.7 908.6,205.2 932.2,205.2 955.8,371.7 979.4,365.4 1003.0,195.5 1026.6,202.8 1050.2,212.7 1073.8,212.7 1097.4,202.8 1121.1,371.1 1144.7,348.3 1168.3,201.6 1191.9,197.5 1215.5,221.6 1239.1,216.1 1262.7,218.3 1286.3,362.2 1309.9,362.6 1333.5,197.9 1357.2,219.1 1380.8,208.6 1404.4,210.8 1428.0,205.3 1451.6,351.7" fill="none" stroke="#6b5bc8" stroke-width="3" stroke-linejoin="miter"/><circle cx="1003" cy="195.3" r="5" fill="#6b5bc8"/><rect x="1014.4" y="164.2" width="152.3" height="60.2" rx="5" fill="#3c3c3c"/><text x="1021" y="182.5" font-size="12" fill="#fff" font-family="Liberation Sans">Mon Jan 12</text><circle cx="1030.6" cy="207.2" r="6" fill="#6b5bc8"/><text x="1047.2" y="212" font-size="12" fill="#fff" font-family="Liberation Sans">Energy <tspan font-weight="700" letter-spacing="-.4">410.70 kW-hr</tspan></text></svg>
<!-- CHART2 -->
<div class="card" style="left:673px;top:506.7px;width:808px;height:412px">
<div class="ht" style="left:16.6px;top:20.7px;font-size:15px;color:#222">Energy vs Occupancy</div>
<div class="ht" style="left:36.5px;top:64.8px;font-size:13px;transform:scaleX(.88);transform-origin:0 0;color:#222">TODAY</div>
</div>
<svg class="abs" style="left:673px;top:506px;z-index:5" width="808" height="413" viewBox="673 506 808 413"><circle cx="1372" cy="578" r="17" fill="#f0f0f0"/><g transform="translate(1360.5,562.5) scale(0.95)"><g fill="none" stroke="#0d1a3d" stroke-width="1.7" stroke-linecap="square"><path d="M4.6 12.2C8 9.3 13 8.8 17 12.5"/><path d="M4.6 19.8L10.6 13.8L14.4 17.8L20.8 10.2"/><path d="M17 12.5L20.6 19"/></g></g><g transform="translate(1418.5,565.5) scale(-1,1)" fill="#0d1a3d"><path d="M3 13h2v-2H3v2zm0 4h2v-2H3v2zm0-8h2V7H3v2zm4 4h14v-2H7v2zm0 4h14v-2H7v2zM7 7v2h14V7H7z"/></g><g transform="translate(1428,566)" fill="#0d1a3d"><circle cx="12" cy="6" r="2"/><circle cx="12" cy="12" r="2"/><circle cx="12" cy="18" r="2"/></g><line x1="743.3" y1="790.2" x2="1451.5" y2="790.2" stroke="#c8c8c8" stroke-dasharray="4 4"/><text x="739.6" y="794.1" text-anchor="end" font-size="11" fill="#bababa" font-family="Liberation Sans">0</text><line x1="743.3" y1="772.7" x2="1451.5" y2="772.7" stroke="#c8c8c8" stroke-dasharray="4 4"/><text x="739.6" y="776.6" text-anchor="end" font-size="11" fill="#bababa" font-family="Liberation Sans">50</text><line x1="743.3" y1="755.1" x2="1451.5" y2="755.1" stroke="#c8c8c8" stroke-dasharray="4 4"/><text x="739.6" y="759.0" text-anchor="end" font-size="11" fill="#bababa" font-family="Liberation Sans">100</text><line x1="743.3" y1="737.6" x2="1451.5" y2="737.6" stroke="#c8c8c8" stroke-dasharray="4 4"/><text x="739.6" y="741.5" text-anchor="end" font-size="11" fill="#bababa" font-family="Liberation Sans">150</text><line x1="743.3" y1="720.0" x2="1451.5" y2="720.0" stroke="#c8c8c8" stroke-dasharray="4 4"/><text x="739.6" y="723.9" text-anchor="end" font-size="11" fill="#bababa" font-family="Liberation Sans">200</text><line x1="743.3" y1="702.5" x2="1451.5" y2="702.5" stroke="#c8c8c8" stroke-dasharray="4 4"/><text x="739.6" y="706.4" text-anchor="end" font-size="11" fill="#bababa" font-family="Liberation Sans">250</text><line x1="743.3" y1="684.9" x2="1451.5" y2="684.9" stroke="#c8c8c8" stroke-dasharray="4 4"/><text x="739.6" y="688.8" text-anchor="end" font-size="11" fill="#bababa" font-family="Liberation Sans">300</text><line x1="743.3" y1="667.4" x2="1451.5" y2="667.4" stroke="#c8c8c8" stroke-dasharray="4 4"/><text x="739.6" y="671.2" text-anchor="end" font-size="11" fill="#bababa" font-family="Liberation Sans">350</text><line x1="743.3" y1="649.8" x2="1451.5" y2="649.8" stroke="#c8c8c8" stroke-dasharray="4 4"/><text x="739.6" y="653.7" text-anchor="end" font-size="11" fill="#bababa" font-family="Liberation Sans">400</text><line x1="743.3" y1="632.2" x2="1451.5" y2="632.2" stroke="#c8c8c8" stroke-dasharray="4 4"/><text x="739.6" y="636.1" text-anchor="end" font-size="11" fill="#bababa" font-family="Liberation Sans">450</text><rect x="750.0" y="656.5" width="10.4" height="133.7" fill="#2ecad8" stroke="#0fbecb" stroke-width="1.6"/><rect x="772.8" y="654.0" width="10.4" height="136.2" fill="#2ecad8" stroke="#0fbecb" stroke-width="1.6"/><rect x="795.7" y="713.7" width="10.4" height="76.5" fill="#2ecad8" stroke="#0fbecb" stroke-width="1.6"/><rect x="818.5" y="709.5" width="10.4" height="80.7" fill="#2ecad8" stroke="#0fbecb" stroke-width="1.6"/><rect x="841.3" y="658.2" width="10.4" height="132.0" fill="#2ecad8" stroke="#0fbecb" stroke-width="1.6"/><rect x="864.1" y="651.0" width="10.4" height="139.2" fill="#2ecad8" stroke="#0fbecb" stroke-width="1.6"/><rect x="887.0" y="650.3" width="10.4" height="139.9" fill="#2ecad8" stroke="#0fbecb" stroke-width="1.6"/><rect x="909.8" y="650.5" width="10.4" height="139.7" fill="#2ecad8" stroke="#0fbecb" stroke-width="1.6"/><rect x="932.6" y="650.5" width="10.4" height="139.7" fill="#2ecad8" stroke="#0fbecb" stroke-width="1.6"/><rect x="955.5" y="714.7" width="10.4" height="75.5" fill="#2ecad8" stroke="#0fbecb" stroke-width="1.6"/><rect x="978.3" y="712.3" width="10.4" height="77.9" fill="#2ecad8" stroke="#0fbecb" stroke-width="1.6"/><rect x="1001.1" y="646.7" width="10.4" height="143.5" fill="#2ecad8" stroke="#0fbecb" stroke-width="1.6"/><rect x="1024.0" y="649.6" width="10.4" height="140.6" fill="#2ecad8" stroke="#0fbecb" stroke-width="1.6"/><rect x="1046.8" y="653.4" width="10.4" height="136.8" fill="#2ecad8" stroke="#0fbecb" stroke-width="1.6"/><rect x="1069.6" y="653.4" width="10.4" height="136.8" fill="#2ecad8" stroke="#0fbecb" stroke-width="1.6"/><rect x="1092.5" y="649.6" width="10.4" height="140.6" fill="#2ecad8" stroke="#0fbecb" stroke-width="1.6"/><rect x="1115.3" y="714.5" width="10.4" height="75.7" fill="#2ecad8" stroke="#0fbecb" stroke-width="1.6"/><rect x="1138.1" y="705.7" width="10.4" height="84.5" fill="#2ecad8" stroke="#0fbecb" stroke-width="1.6"/><rect x="1160.9" y="649.1" width="10.4" height="141.1" fill="#2ecad8" stroke="#0fbecb" stroke-width="1.6"/><rect x="1183.8" y="647.5" width="10.4" height="142.7" fill="#2ecad8" stroke="#0fbecb" stroke-width="1.6"/><rect x="1206.6" y="656.8" width="10.4" height="133.4" fill="#2ecad8" stroke="#0fbecb" stroke-width="1.6"/><rect x="1229.4" y="654.7" width="10.4" height="135.5" fill="#2ecad8" stroke="#0fbecb" stroke-width="1.6"/><rect x="1252.3" y="655.6" width="10.4" height="134.6" fill="#2ecad8" stroke="#0fbecb" stroke-width="1.6"/><rect x="1275.1" y="711.0" width="10.4" height="79.2" fill="#2ecad8" stroke="#0fbecb" stroke-width="1.6"/><rect x="1297.9" y="711.2" width="10.4" height="79.0" fill="#2ecad8" stroke="#0fbecb" stroke-width="1.6"/><rect x="1320.8" y="647.7" width="10.4" height="142.5" fill="#2ecad8" stroke="#0fbecb" stroke-width="1.6"/><rect x="1343.6" y="655.9" width="10.4" height="134.3" fill="#2ecad8" stroke="#0fbecb" stroke-width="1.6"/><rect x="1366.4" y="651.8" width="10.4" height="138.4" fill="#2ecad8" stroke="#0fbecb" stroke-width="1.6"/><rect x="1389.2" y="652.7" width="10.4" height="137.5" fill="#2ecad8" stroke="#0fbecb" stroke-width="1.6"/><rect x="1412.1" y="650.5" width="10.4" height="139.7" fill="#2ecad8" stroke="#0fbecb" stroke-width="1.6"/><rect x="1434.9" y="707.0" width="10.4" height="83.2" fill="#2ecad8" stroke="#0fbecb" stroke-width="1.6"/><line x1="755.2" y1="790.2" x2="755.2" y2="796" stroke="#c8c8c8"/><text x="755.2" y="814" text-anchor="middle" font-size="11" fill="#b8b8b8" font-family="Liberation Sans" font-weight="700">Thu Jan 1</text><line x1="823.7" y1="790.2" x2="823.7" y2="796" stroke="#c8c8c8"/><text x="823.7" y="814" text-anchor="middle" font-size="11" fill="#b8b8b8" font-family="Liberation Sans">Sun Jan 4</text><line x1="892.2" y1="790.2" x2="892.2" y2="796" stroke="#c8c8c8"/><text x="892.2" y="814" text-anchor="middle" font-size="11" fill="#b8b8b8" font-family="Liberation Sans">Wed Jan 7</text><line x1="960.7" y1="790.2" x2="960.7" y2="796" stroke="#c8c8c8"/><text x="960.7" y="814" text-anchor="middle" font-size="11" fill="#b8b8b8" font-family="Liberation Sans">Sat Jan 10</text><line x1="1029.2" y1="790.2" x2="1029.2" y2="796" stroke="#c8c8c8"/><text x="1029.2" y="814" text-anchor="middle" font-size="11" fill="#b8b8b8" font-family="Liberation Sans">Tue Jan 13</text><line x1="1097.7" y1="790.2" x2="1097.7" y2="796" stroke="#c8c8c8"/><text x="1097.7" y="814" text-anchor="middle" font-size="11" fill="#b8b8b8" font-family="Liberation Sans">Fri Jan 16</text><line x1="1166.1" y1="790.2" x2="1166.1" y2="796" stroke="#c8c8c8"/><text x="1166.1" y="814" text-anchor="middle" font-size="11" fill="#b8b8b8" font-family="Liberation Sans">Mon Jan 19</text><line x1="1234.6" y1="790.2" x2="1234.6" y2="796" stroke="#c8c8c8"/><text x="1234.6" y="814" text-anchor="middle" font-size="11" fill="#b8b8b8" font-family="Liberation Sans">Thu Jan 22</text><line x1="1303.1" y1="790.2" x2="1303.1" y2="796" stroke="#c8c8c8"/><text x="1303.1" y="814" text-anchor="middle" font-size="11" fill="#b8b8b8" font-family="Liberation Sans">Sun Jan 25</text><line x1="1371.6" y1="790.2" x2="1371.6" y2="796" stroke="#c8c8c8"/><text x="1371.6" y="814" text-anchor="middle" font-size="11" fill="#b8b8b8" font-family="Liberation Sans">Wed Jan 28</text><text transform="translate(710.5,706.6) rotate(-90)" text-anchor="middle" font-size="11" fill="#c4c4c4" font-family="Liberation Sans">kW-hr /</text><polyline points="755.2,766.7 778.0,767.4 800.9,787.4 823.7,787.4 846.5,766.0 869.4,766.7 892.2,766.3 915.0,766.7 937.8,766.3 960.7,788.1 983.5,788.1 1006.3,766.7 1029.2,767.2 1052.0,765.8 1074.8,767.5 1097.7,766.7 1120.5,788.1 1143.3,788.1 1166.1,766.7 1189.0,766.0 1211.8,767.2 1234.6,766.7 1257.5,765.8 1280.3,788.1 1303.1,788.1 1326.0,766.7 1348.8,766.0 1371.6,767.5 1394.4,766.7 1417.3,766.0 1440.1,786.5" fill="none" stroke="#6b5bc8" stroke-width="3" stroke-linejoin="miter"/><circle cx="1016.8" cy="858" r="6" fill="#1fc5d3"/><text x="1026.6" y="862" font-size="11" fill="#c4c4c4" font-family="Liberation Sans">Energy</text><circle cx="1080" cy="858" r="6" fill="#6b5bc8"/><text x="1089.6" y="862" font-size="11" fill="#c4c4c4" font-family="Liberation Sans">Occupancy</text></svg>
<!-- HORIZON -->
<div class="card" style="left:1497px;top:61.5px;width:396px;height:430px"></div>
<div class="ht" style="left:1512.5px;top:84.3px;font-size:23.5px;color:#222;z-index:6">Horizon Building - Today</div>
<div class="ht" style="left:1545.8px;top:153.6px;font-size:15px;color:#222;z-index:6">Current Load</div>
<div class="ht" style="left:1734.8px;top:153.6px;font-size:15px;color:#222;z-index:6">Occupancy</div>
<div class="ht" style="left:1632.5px;top:347.7px;font-size:32px;color:#222;transform:scaleX(.885);transform-origin:0 0;z-index:6">5.42%</div>
<div class="ht" style="left:1739.5px;top:353.5px;font-size:23px;color:#222;z-index:6">$</div>
<svg class="abs" style="left:1497px;top:61px;z-index:5" width="396" height="431" viewBox="1497 61 396 431"><defs><linearGradient id="spk" x1="0" y1="0" x2="0" y2="1"><stop offset="0" stop-color="#6b5bc8" stop-opacity=".28"/><stop offset="1" stop-color="#6b5bc8" stop-opacity="0"/></linearGradient></defs><circle cx="1651.1" cy="161.8" r="9.9" fill="#222"/><path d="M1652.6 154.5 L1647.2 163 H1650.6 L1649.3 169.3 L1655 160.5 H1651.5 Z" fill="#fff"/><g transform="translate(1813,150)" fill="#222"><path d="M16 11c1.66 0 2.99-1.34 2.99-3S17.66 5 16 5c-1.66 0-3 1.34-3 3s1.34 3 3 3zm-8 0c1.66 0 2.99-1.34 2.99-3S9.66 5 8 5C6.34 5 5 6.34 5 8s1.34 3 3 3zm0 2c-2.33 0-7 1.17-7 3.5V19h14v-2.5c0-2.33-4.670-3.5-7-3.5zm8 0c-.29 0-.62.02-.97.05 1.16.84 1.97 1.97 1.97 3.45V19h6v-2.5c0-2.33-4.67-3.5-7-3.5z"/></g><line x1="1561.46" y1="299.54" x2="1557.22" y2="303.78" stroke="#cdd0d8" stroke-width="2"/><line x1="1553.53" y1="289.48" x2="1548.42" y2="292.61" stroke="#cdd0d8" stroke-width="2"/><line x1="1548.17" y1="277.84" x2="1542.46" y2="279.70" stroke="#cdd0d8" stroke-width="2"/><line x1="1545.67" y1="265.28" x2="1539.69" y2="265.75" stroke="#cdd0d8" stroke-width="2"/><line x1="1546.17" y1="252.47" x2="1533.82" y2="250.52" stroke="#cdd0d8" stroke-width="2"/><line x1="1549.65" y1="240.14" x2="1544.11" y2="237.85" stroke="#cdd0d8" stroke-width="2"/><line x1="1555.91" y1="228.97" x2="1551.05" y2="225.44" stroke="#cdd0d8" stroke-width="2"/><line x1="1564.61" y1="219.56" x2="1560.71" y2="215.00" stroke="#cdd0d8" stroke-width="2"/><line x1="1575.26" y1="212.44" x2="1572.53" y2="207.09" stroke="#cdd0d8" stroke-width="2"/><line x1="1587.28" y1="208.01" x2="1585.88" y2="202.17" stroke="#cdd0d8" stroke-width="2"/><line x1="1600.00" y1="206.50" x2="1600.00" y2="194.00" stroke="#cdd0d8" stroke-width="2"/><line x1="1612.72" y1="208.01" x2="1614.12" y2="202.17" stroke="#cdd0d8" stroke-width="2"/><line x1="1624.74" y1="212.44" x2="1627.47" y2="207.09" stroke="#cdd0d8" stroke-width="2"/><line x1="1635.39" y1="219.56" x2="1639.29" y2="215.00" stroke="#cdd0d8" stroke-width="2"/><line x1="1644.09" y1="228.97" x2="1648.95" y2="225.44" stroke="#cdd0d8" stroke-width="2"/><line x1="1650.35" y1="240.14" x2="1655.89" y2="237.85" stroke="#cdd0d8" stroke-width="2"/><line x1="1653.83" y1="252.47" x2="1666.18" y2="250.52" stroke="#cdd0d8" stroke-width="2"/><line x1="1654.33" y1="265.28" x2="1660.31" y2="265.75" stroke="#cdd0d8" stroke-width="2"/><line x1="1651.83" y1="277.84" x2="1657.54" y2="279.70" stroke="#cdd0d8" stroke-width="2"/><line x1="1646.47" y1="289.48" x2="1651.58" y2="292.61" stroke="#cdd0d8" stroke-width="2"/><line x1="1638.54" y1="299.54" x2="1642.78" y2="303.78" stroke="#cdd0d8" stroke-width="2"/><path d="M1578.43 282.57 A30.5 30.5 0 1 1 1621.57 282.57" fill="none" stroke="#e3e4ea" stroke-width="21"/><path d="M1578.43 282.57 A30.5 30.5 0 0 1 1600.00 230.50" fill="none" stroke="#84c5f8" stroke-width="21"/><line x1="1600.0" y1="261.0" x2="1600.00" y2="205.00" stroke="#323e4e" stroke-width="3.6" stroke-linecap="round"/><text x="1600" y="308.5" text-anchor="middle" font-size="16" fill="#d0d3db" font-family="Liberation Sans">49.99</text><text x="1600" y="322.8" text-anchor="middle" font-size="9" fill="#d3d6de" font-family="Liberation Sans">Kw</text><line x1="1735.66" y1="299.54" x2="1731.42" y2="303.78" stroke="#cdd0d8" stroke-width="2"/><line x1="1727.73" y1="289.48" x2="1722.62" y2="292.61" stroke="#cdd0d8" stroke-width="2"/><line x1="1722.37" y1="277.84" x2="1716.66" y2="279.70" stroke="#cdd0d8" stroke-width="2"/><line x1="1719.87" y1="265.28" x2="1713.89" y2="265.75" stroke="#cdd0d8" stroke-width="2"/><line x1="1720.37" y1="252.47" x2="1708.02" y2="250.52" stroke="#cdd0d8" stroke-width="2"/><line x1="1723.85" y1="240.14" x2="1718.31" y2="237.85" stroke="#cdd0d8" stroke-width="2"/><line x1="1730.11" y1="228.97" x2="1725.25" y2="225.44" stroke="#cdd0d8" stroke-width="2"/><line x1="1738.81" y1="219.56" x2="1734.91" y2="215.00" stroke="#cdd0d8" stroke-width="2"/><line x1="1749.46" y1="212.44" x2="1746.73" y2="207.09" stroke="#cdd0d8" stroke-width="2"/><line x1="1761.48" y1="208.01" x2="1760.08" y2="202.17" stroke="#cdd0d8" stroke-width="2"/><line x1="1774.20" y1="206.50" x2="1774.20" y2="194.00" stroke="#cdd0d8" stroke-width="2"/><line x1="1786.92" y1="208.01" x2="1788.32" y2="202.17" stroke="#cdd0d8" stroke-width="2"/><line x1="1798.94" y1="212.44" x2="1801.67" y2="207.09" stroke="#cdd0d8" stroke-width="2"/><line x1="1809.59" y1="219.56" x2="1813.49" y2="215.00" stroke="#cdd0d8" stroke-width="2"/><line x1="1818.29" y1="228.97" x2="1823.15" y2="225.44" stroke="#cdd0d8" stroke-width="2"/><line x1="1824.55" y1="240.14" x2="1830.09" y2="237.85" stroke="#cdd0d8" stroke-width="2"/><line x1="1828.03" y1="252.47" x2="1840.38" y2="250.52" stroke="#cdd0d8" stroke-width="2"/><line x1="1828.53" y1="265.28" x2="1834.51" y2="265.75" stroke="#cdd0d8" stroke-width="2"/><line x1="1826.03" y1="277.84" x2="1831.74" y2="279.70" stroke="#cdd0d8" stroke-width="2"/><line x1="1820.67" y1="289.48" x2="1825.78" y2="292.61" stroke="#cdd0d8" stroke-width="2"/><line x1="1812.74" y1="299.54" x2="1816.98" y2="303.78" stroke="#cdd0d8" stroke-width="2"/><path d="M1752.63 282.57 A30.5 30.5 0 1 1 1795.77 282.57" fill="none" stroke="#e3e4ea" stroke-width="21"/><path d="M1752.63 282.57 A30.5 30.5 0 1 1 1802.38 249.33" fill="none" stroke="#9cf57a" stroke-width="21"/><line x1="1774.2" y1="261.0" x2="1825.94" y2="239.57" stroke="#323e4e" stroke-width="3.6" stroke-linecap="round"/><text x="1774.2" y="308.5" text-anchor="middle" font-size="16" fill="#d0d3db" font-family="Liberation Sans">75.00</text><text x="1774.2" y="322.8" text-anchor="middle" font-size="9" fill="#d3d6de" font-family="Liberation Sans">%</text><path d="M1716 372 L1724.2 357.8 L1732.4 372 Z" fill="#f0485a"/><polygon points="1525.9,467 1583,420.2 1636.7,417 1694.8,423.9 1749.8,417 1806.3,418.7 1863.9,449.1 1863.9,486 1525.9,486" fill="url(#spk)"/><polyline points="1525.9,467 1583,420.2 1636.7,417 1694.8,423.9 1749.8,417 1806.3,418.7 1863.9,449.1" fill="none" stroke="#5b4bc4" stroke-width="3"/></svg>
<!-- BREAKDOWN -->
<div class="card" style="left:1497px;top:507px;width:396px;height:412px"></div>
<div class="ht" style="left:1513.5px;top:527px;font-size:15px;color:#222;z-index:6">Energy Consumption Breakdown</div>
<svg class="abs" style="left:1497px;top:507px;z-index:5" width="396" height="412" viewBox="1497 507 396 412"><path d="M1695.7 701.4 L1695.70 600.90 A100.5 100.5 0 0 1 1754.77 782.71 Z" fill="#f24c5c" stroke="#f24c5c" stroke-width=".6"/><path d="M1695.7 701.4 L1754.77 782.71 A100.5 100.5 0 0 1 1636.63 782.71 Z" fill="#3f52d3" stroke="#3f52d3" stroke-width=".6"/><path d="M1695.7 701.4 L1636.63 782.71 A100.5 100.5 0 0 1 1600.12 670.34 Z" fill="#5080e0" stroke="#5080e0" stroke-width=".6"/><path d="M1695.7 701.4 L1600.12 670.34 A100.5 100.5 0 0 1 1636.63 620.09 Z" fill="#15cbc9" stroke="#15cbc9" stroke-width=".6"/><path d="M1695.7 701.4 L1636.63 620.09 A100.5 100.5 0 0 1 1695.70 600.90 Z" fill="#4fdc80" stroke="#4fdc80" stroke-width=".6"/><text x="1805" y="670.8000000000001" font-size="13" fill="#c6c6c6" font-family="Liberation Sans">HVAC</text><text x="1626.3" y="601.6" font-size="13" fill="#c6c6c6" font-family="Liberation Sans">Misc</text><text x="1514.2" y="640.9" font-size="13" fill="#c6c6c6" font-family="Liberation Sans">Water Heating</text><text x="1519.8" y="738.1" font-size="13" fill="#c6c6c6" font-family="Liberation Sans">Plug Loads</text><text x="1703" y="813.0" font-size="13" fill="#c6c6c6" font-family="Liberation Sans">Lighting</text><rect x="1606" y="832.6" width="41.6" height="13.6" fill="#f24c5c"/><text x="1653" y="843.6999999999999" font-size="12" fill="#666" font-family="Liberation Sans">HVAC</text><rect x="1694.2" y="832.6" width="41.6" height="13.6" fill="#3f52d3"/><text x="1741.6" y="843.6999999999999" font-size="12" fill="#666" font-family="Liberation Sans">Lighting</text><rect x="1575" y="854.6" width="41.6" height="13.6" fill="#5080e0"/><text x="1622" y="865.6999999999999" font-size="12" fill="#666" font-family="Liberation Sans">Plug Loads</text><rect x="1691" y="854.6" width="41.6" height="13.6" fill="#15cbc9"/><text x="1738.4" y="865.6999999999999" font-size="12" fill="#666" font-family="Liberation Sans">Water Heating</text><rect x="1659" y="876.8000000000001" width="41.6" height="13.6" fill="#4fdc80"/><text x="1706" y="887.9" font-size="12" fill="#666" font-family="Liberation Sans">Misc</text></svg>
</body></html>
